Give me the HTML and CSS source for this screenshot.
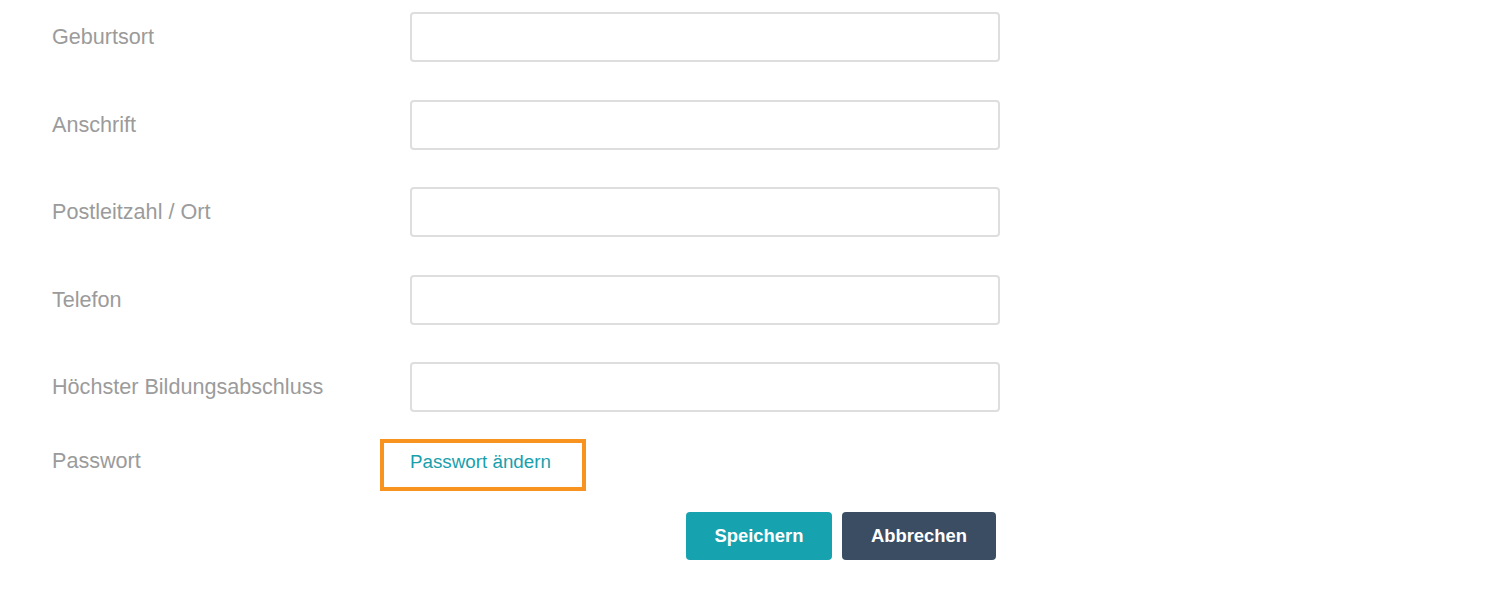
FILE: index.html
```html
<!DOCTYPE html>
<html lang="de">
<head>
<meta charset="utf-8">
<link rel="stylesheet" href="styles.css">
</head>
<body>
<form class="form">
  <div class="row">
    <label class="label">Geburtsort</label>
    <input class="input" type="text">
  </div>
  <div class="row">
    <label class="label">Anschrift</label>
    <input class="input" type="text">
  </div>
  <div class="row">
    <label class="label">Postleitzahl / Ort</label>
    <input class="input" type="text">
  </div>
  <div class="row">
    <label class="label">Telefon</label>
    <input class="input" type="text">
  </div>
  <div class="row">
    <label class="label">Höchster Bildungsabschluss</label>
    <input class="input" type="text">
  </div>
  <div class="row row-pw">
    <span class="label">Passwort</span>
    <div class="pw-cell"><a class="pw-link" href="#">Passwort ändern</a></div>
  </div>
  <div class="actions">
    <button type="button" class="btn btn-save">Speichern</button>
    <button type="button" class="btn btn-cancel">Abbrechen</button>
  </div>
</form>
</body>
</html>
```
FILE: styles.css
```css
html, body {
  margin: 0;
  padding: 0;
  background: #ffffff;
}
body {
  font-family: "Liberation Sans", Arial, Helvetica, sans-serif;
}
.form {
  display: flex;
  flex-direction: column;
  gap: 37.5px;
  padding: 12px 0 0 52px;
  width: 948px;
}
.row {
  display: grid;
  grid-template-columns: 358px 590px;
  align-items: center;
}
.label {
  font-size: 21.6px;
  color: #9b9b9b;
}
.input {
  box-sizing: border-box;
  height: 50px;
  width: 590px;
  border: 2px solid #dedede;
  border-radius: 4px;
  background: #fff;
  margin: 0;
  padding: 0 12px;
  font: inherit;
  outline: none;
}
.row-pw {
  margin-top: -10.5px;
  height: 52px;
}
.row-pw .label {
  margin-top: -8px;
}
.pw-cell {
  display: flex;
}
.pw-link {
  box-sizing: border-box;
  display: inline-flex;
  align-items: flex-start;
  width: 206px;
  height: 52px;
  margin-left: -30px;
  padding: 8px 0 0 26px;
  border: 4px solid #f7931e;
  color: #18a0ad;
  font-size: 18.8px;
  text-decoration: none;
}
.actions {
  margin-top: -16.5px;
  display: flex;
  justify-content: flex-end;
  gap: 10px;
  padding-right: 4px;
}
.btn {
  height: 48px;
  border: none;
  border-radius: 4px;
  color: #fff;
  font-family: "Liberation Sans", Arial, Helvetica, sans-serif;
  font-weight: bold;
  font-size: 18.4px;
  padding: 0;
  cursor: pointer;
}
.btn-save {
  width: 146px;
  background: #17a2af;
}
.btn-cancel {
  width: 154px;
  background: #3a4d62;
}
```
